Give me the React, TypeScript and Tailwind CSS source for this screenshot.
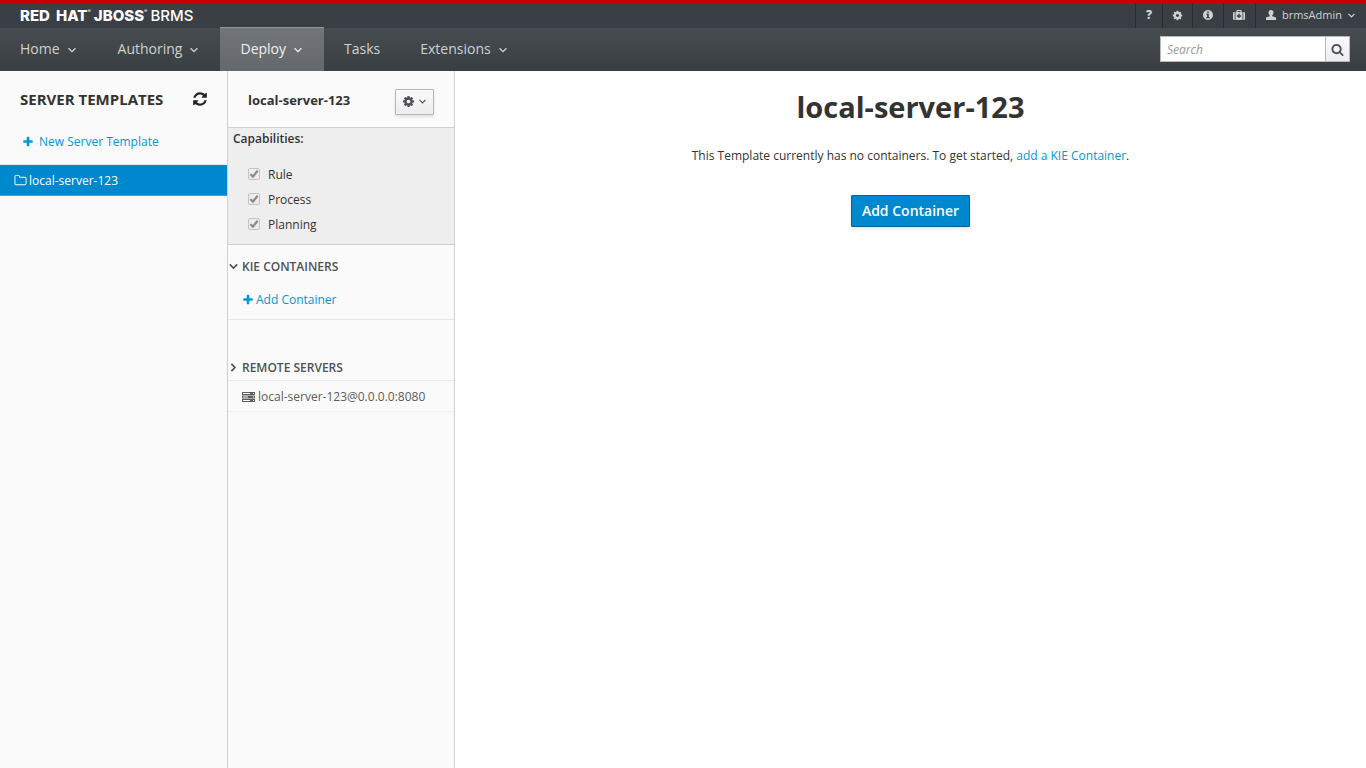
import React from "react";

type IconProps = { className?: string };

const COG =
  "M1152 896q0-106-75-181t-181-75-181 75-75 181 75 181 181 75 181-75 75-181zm512-109v222q0 12-8 23t-20 13l-185 28q-19 54-39 91 35 50 107 138 10 12 10 25t-9 23q-27 37-99 108t-94 71q-12 0-26-9l-138-108q-44 23-91 38-16 136-29 186-7 28-36 28h-222q-14 0-24.5-8.5t-11.5-21.5l-28-184q-49-16-90-37l-141 107q-10 9-25 9-14 0-25-11-126-114-165-168-7-10-7-23 0-12 8-23 15-21 51-66.5t54-70.5q-27-50-41-99l-183-27q-13-2-21-12.5t-8-23.5v-222q0-12 8-23t19-13l186-28q14-46 39-92-40-57-107-138-10-12-10-24 0-10 9-23 26-36 98.5-107.5t94.5-71.5q13 0 26 10l138 107q44-23 91-38 16-136 29-186 7-28 36-28h222q14 0 24.5 8.5t11.5 21.5l28 184q49 16 90 37l142-107q9-9 24-9 13 0 25 10 129 119 165 170 7 8 7 22 0 12-8 23-15 21-51 66.5t-54 70.5q26 50 41 98l183 28q13 2 21 12.5t8 23.5z";
const PLUS =
  "M1600 736v192q0 40-28 68t-68 28h-416v416q0 40-28 68t-68 28h-192q-40 0-68-28t-28-68v-416h-416q-40 0-68-28t-28-68v-192q0-40 28-68t68-28h416v-416q0-40 28-68t68-28h192q40 0 68 28t28 68v416h416q40 0 68 28t28 68z";
const REFRESH =
  "M1639 1056q0 5-1 7-64 268-268 434.5t-478 166.5q-146 0-282.5-55t-243.5-157l-129 129q-19 19-45 19t-45-19-19-45v-448q0-26 19-45t45-19h448q26 0 45 19t19 45-19 45l-137 137q71 66 161 102t187 36q134 0 250-65t186-179q11-17 53-117 8-23 30-23h192q13 0 22.5 9.5t9.5 22.5zm25-800v448q0 26-19 45t-45 19h-448q-26 0-45-19t-19-45 19-45l138-138q-148-137-349-137-134 0-250 65t-186 179q-11 17-53 117-8 23-30 23h-199q-13 0-22.5-9.5t-9.5-22.5v-7q65-268 270-434.5t480-166.5q146 0 284 55.5t245 156.5l130-129q19-19 45-19t45 19 19 45z";
const SEARCH =
  "M1216 832q0-185-131.5-316.5t-316.5-131.5-316.5 131.5-131.5 316.5 131.5 316.5 316.5 131.5 316.5-131.5 131.5-316.5zm512 832q0 52-38 90t-90 38q-54 0-90-38l-343-342q-179 124-399 124-143 0-273.5-55.5t-225-150-150-225-55.5-273.5 55.5-273.5 150-225 225-150 273.5-55.5 273.5 55.5 225 150 150 225 55.5 273.5q0 220-124 399l343 343q37 37 37 90z";
const FOLDER =
  "M1600 1312v-704q0-40-28-68t-68-28h-704q-40 0-68-28t-28-68v-64q0-40-28-68t-68-28h-320q-40 0-68 28t-28 68v960q0 40 28 68t68 28h1216q40 0 68-28t28-68zm128-704v704q0 92-66 158t-158 66h-1216q-92 0-158-66t-66-158v-960q0-92 66-158t158-66h320q92 0 158 66t66 158v32h672q92 0 158 66t66 158z";

function Glyph({ d, className = "size-3" }: IconProps & { d: string }) {
  return (
    <svg viewBox="0 0 1792 1792" fill="currentColor" aria-hidden="true" className={className}>
      <path d={d} />
    </svg>
  );
}

function Angle({ className = "size-2" }: IconProps) {
  return (
    <svg viewBox="0 0 8 8" fill="none" stroke="currentColor" strokeWidth="1.3" aria-hidden="true" className={className}>
      <path d="M0.6 2.2 4 5.6 7.4 2.2" />
    </svg>
  );
}

function SectionAngle({ className = "" }: IconProps) {
  return (
    <svg viewBox="0 0 9 9" fill="none" stroke="currentColor" strokeWidth="1.7" aria-hidden="true" className={`size-[9px] ${className}`}>
      <path d="M0.8 2.4 4.5 6 8.2 2.4" />
    </svg>
  );
}

function InfoIcon() {
  return (
    <svg viewBox="0 0 10 10" aria-hidden="true" className="size-[10px]">
      <path
        fill="currentColor"
        fillRule="evenodd"
        d="M5 0a5 5 0 1 0 0 10A5 5 0 0 0 5 0zM4.2 1.5h1.6V3H4.2zM3.3 3.8h2.5v3.3h.9v1.2H3.3V7.1h.9V5h-.9z"
      />
    </svg>
  );
}

function MedkitIcon() {
  return (
    <svg viewBox="0 0 12 10" aria-hidden="true" className="h-[10px] w-3">
      <path
        fill="currentColor"
        fillRule="evenodd"
        d="M3.4 2V.8q0-.8.8-.8h3.6q.8 0 .8.8V2h.9v8H2.5V2zM4.5 2h3v-.9h-3zM5.3 3.8v1.4H3.9v1.5h1.4v1.4h1.4V6.7h1.4V5.2H6.7V3.8zM1.7 2v8h-.6Q0 10 0 8.9V3.1Q0 2 1.1 2zM10.3 2h.6Q12 2 12 3.1v5.8q0 1.1-1.1 1.1h-.6z"
      />
    </svg>
  );
}

function UserIcon() {
  return (
    <svg viewBox="0 0 10 10" fill="currentColor" aria-hidden="true" className="size-[10px]">
      <path d="M5 0c1.7 0 2.5 1 2.5 2.6 0 1.2-.6 2.3-1.3 2.9v.8l2.6.8c.9.3 1.2.8 1.2 1.5V10H0V8.6c0-.7.3-1.2 1.2-1.5l2.6-.8v-.8c-.7-.6-1.3-1.7-1.3-2.9C2.5 1 3.3 0 5 0z" />
    </svg>
  );
}

function ServerIcon() {
  return (
    <svg viewBox="0 0 13 10" aria-hidden="true" className="h-[10px] w-[13px]">
      <path
        fill="currentColor"
        fillRule="evenodd"
        d="M0 0h13v3H0zM0 3.5h13v3H0zM0 7h13v3H0zM1 1v1h7V1zM1 4.5v1h5v-1zM1 8v1h7V8zM11 1v1h1V1zM11 4.5v1h1v-1zM11 8v1h1V8z"
      />
    </svg>
  );
}

const navItems = [
  { label: "Home", menu: true },
  { label: "Authoring", menu: true },
  { label: "Deploy", menu: true, active: true },
  { label: "Tasks" },
  { label: "Extensions", menu: true },
];

const utilityButton = "flex h-full items-center justify-center border-l border-[#292c31] pb-px text-[#d1d1d1]";

function Header() {
  return (
    <header className="border-t-[3px] border-[#cc0000] bg-[#393f45]">
      <div className="flex h-[25px] items-center justify-between pl-5">
        <div className="flex items-center font-['Inter',sans-serif] text-[15px] leading-4 text-white">
          <span className="font-extrabold">RED</span>
          <span className="ml-[6px] font-extrabold">HAT</span>
          <span className="self-start text-[5px] leading-[6px]">®</span>
          <span className="ml-[3px] font-extrabold">JBOSS</span>
          <span className="self-start text-[5px] leading-[6px]">®</span>
          <span className="ml-[3px] font-medium">BRMS</span>
        </div>
        <div className="flex h-full items-center">
          <button type="button" aria-label="Help" className={`${utilityButton} w-[27px]`}>
            <span className="text-[12px] font-extrabold">?</span>
          </button>
          <button type="button" aria-label="Settings" className={`${utilityButton} w-[30px]`}>
            <Glyph d={COG} className="size-[11px]" />
          </button>
          <button type="button" aria-label="About" className={`${utilityButton} w-[31px]`}>
            <InfoIcon />
          </button>
          <button type="button" aria-label="Support" className={`${utilityButton} w-8`}>
            <MedkitIcon />
          </button>
          <button type="button" className={`${utilityButton} gap-[6px] pr-[11px] pl-[10px]`}>
            <UserIcon />
            <span className="text-[11px]">brmsAdmin</span>
            <Angle className="size-[7px]" />
          </button>
        </div>
      </div>
      <div className="flex h-[43px] justify-between bg-linear-to-b from-[#474c50] to-[#383f43] pr-4">
        <nav className="flex">
          {navItems.map((item) => (
            <a
              key={item.label}
              href="#"
              className={
                item.active
                  ? "-mt-px flex items-center border-t border-[#949699] bg-linear-to-b from-[#72757a] to-[#64676c] px-5 pb-[2px] text-[14px] text-[#f1f1f1]"
                  : "flex items-center px-5 pb-[2px] text-[14px] text-[#d1d1d1]"
              }
            >
              {item.label}
              {item.menu && <Angle className="mt-[2px] mr-[2px] ml-2 size-2" />}
            </a>
          ))}
        </nav>
        <form className="flex items-center pb-px">
          <input
            type="text"
            aria-label="Search"
            placeholder="Search"
            className="h-[26px] w-[166px] border border-[#bababa] bg-white px-[6px] text-[12px] text-[#333] outline-none placeholder:text-[#999] placeholder:italic"
          />
          <button
            type="button"
            aria-label="Run search"
            className="-ml-px flex h-[26px] w-[25px] items-center justify-center border border-[#b7b7b7] bg-linear-to-b from-[#fafafa] to-[#ededed] text-[#4d5258]"
          >
            <Glyph d={SEARCH} className="size-[13px]" />
          </button>
        </form>
      </div>
    </header>
  );
}

function TemplateList() {
  return (
    <aside className="w-[228px] shrink-0 border-r border-[#d1d1d1] bg-[#fafafa]">
      <div className="flex items-center justify-between pt-4 pr-[19px] pl-5">
        <h2 className="text-[15px] leading-6 font-bold text-[#333]">SERVER TEMPLATES</h2>
        <button type="button" aria-label="Refresh" className="text-[#222]">
          <Glyph d={REFRESH} className="size-4" />
        </button>
      </div>
      <a href="#" className="mt-[21px] flex items-center gap-[5px] pl-[22px] leading-5 text-[#0099d3]">
        <Glyph d={PLUS} />
        New Server Template
      </a>
      <a
        href="#"
        className="mt-3 flex h-8 items-center gap-[2px] border-y border-[#e8e8e8] border-b-[#39a5dc] bg-[#0088ce] pt-px pl-[14px] text-white"
      >
        <Glyph d={FOLDER} className="size-[13px]" />
        local-server-123
      </a>
    </aside>
  );
}

function Capability({ label }: { label: string }) {
  return (
    <label className="flex h-[25px] items-center gap-2">
      <span className="relative mb-[2px] flex size-3">
        <input
          type="checkbox"
          defaultChecked
          disabled
          className="size-3 appearance-none rounded-[2px] border border-[#c5c5c5] bg-[#ececec]"
        />
        <svg viewBox="0 0 12 12" fill="none" stroke="#8a8a8a" strokeWidth="2.2" aria-hidden="true" className="absolute inset-0 size-3">
          <path d="M2.4 6.2 5 8.6 9.6 2.8" />
        </svg>
      </span>
      {label}
    </label>
  );
}

function TemplateDetails() {
  return (
    <section className="w-[227px] shrink-0 border-r border-[#d1d1d1] bg-[#fafafa]">
      <div className="flex h-[57px] items-start justify-between border-b border-[#d1d1d1] px-5 pt-[18px]">
        <h3 className="text-[13px] leading-[22px] font-bold text-[#333]">local-server-123</h3>
        <button
          type="button"
          aria-label="Template actions"
          className="flex h-[26px] w-[39px] items-center justify-center gap-1 rounded-[1px] border border-[#b7b7b7] bg-linear-to-b from-[#fafafa] to-[#ededed] pr-[2px] pb-px text-[#4d5258] shadow-[0_2px_3px_rgba(3,3,3,0.1)]"
        >
          <Glyph d={COG} className="size-[13px]" />
          <Angle className="size-[7px]" />
        </button>
      </div>
      <div className="border-b border-[#d1d1d1] bg-[#eeeeee] pb-[7px]">
        <h4 className="pl-[5px] leading-[22px] font-semibold">Capabilities:</h4>
        <div className="pt-3 pl-5">
          <Capability label="Rule" />
          <Capability label="Process" />
          <Capability label="Planning" />
        </div>
      </div>
      <div className="border-b border-[#e8e8e8] pt-3 pb-[9px]">
        <h4 className="flex items-center gap-1 pl-[1px] leading-5 font-semibold text-[#4d5258]">
          <SectionAngle className="mb-px" />
          KIE CONTAINERS
        </h4>
        <a href="#" className="mt-[13px] flex items-center gap-[2px] pl-[14px] leading-5 text-[#0099d3]">
          <Glyph d={PLUS} />
          Add Container
        </a>
      </div>
      <div className="pt-[38px]">
        <h4 className="flex items-center gap-1 border-b border-[#e8e8e8] pb-[2px] pl-[1px] leading-5 font-semibold text-[#4d5258]">
          <SectionAngle className="mb-px -rotate-90" />
          REMOTE SERVERS
        </h4>
        <a href="#" className="flex h-[31px] items-center gap-[3px] border-b border-[#f0f0f0] pt-px pl-[14px] text-[#5c5c5c]">
          <ServerIcon />
          local-server-123@0.0.0.0:8080
        </a>
      </div>
    </section>
  );
}

export default function App() {
  return (
    <div className="flex min-h-screen flex-col bg-white font-['Open_Sans',sans-serif] text-[12px] text-[#333]">
      <Header />
      <div className="flex grow">
        <TemplateList />
        <TemplateDetails />
        <main className="flex grow flex-col items-center pt-[17px]">
          <h1 className="text-[29px] leading-[38px] font-bold">local-server-123</h1>
          <p className="mt-5 leading-5">
            This Template currently has no containers. To get started,{" "}
            <a href="#" className="text-[#0099d3]">add a KIE Container</a>.
          </p>
          <button
            type="button"
            className="mt-[29px] h-8 rounded-[1px] border border-[#00659c] bg-[#0088ce] px-[10px] pb-[2px] text-[14px] font-semibold text-white shadow-[0_2px_3px_rgba(3,3,3,0.1)]"
          >
            Add Container
          </button>
        </main>
      </div>
    </div>
  );
}
